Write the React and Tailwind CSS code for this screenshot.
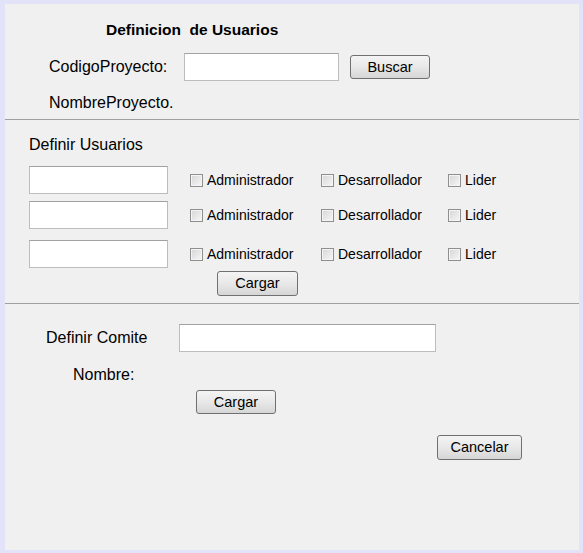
function Field({ className }) {
  return <div className={`bg-white border border-[#bdbdbd] border-t-[#a2a2a2] h-[28px] ${className}`} />
}

function Btn({ children, className }) {
  return (
    <button className={`h-[24px] rounded-[3px] border border-[#707070] bg-linear-to-b from-[#f4f4f4] via-[#e8e8e8] to-[#d6d6d6] text-[14.5px] leading-none text-black ${className}`}>
      {children}
    </button>
  )
}

function Check({ label, className }) {
  return (
    <div className={`flex items-center gap-[4px] text-[14px] ${className}`}>
      <span className="w-[13px] h-[13px] border border-[#8e8f8f] bg-linear-to-br from-[#d6d6d6] to-[#f7f7f7] shadow-[inset_0_0_0_1px_#f4f4f4]" />
      <span>{label}</span>
    </div>
  )
}

function UserRow({ className }) {
  return (
    <div className={`flex items-center ${className}`}>
      <Field className="w-[139px]" />
      <Check label="Administrador" className="ml-[22px] w-[131px]" />
      <Check label="Desarrollador" className="w-[127px]" />
      <Check label="Lider" />
    </div>
  )
}

export default function App() {
  return (
    <div className="w-[583px] h-[553px] bg-[#e2e2f9] pt-[4px] pl-[5px] pr-[4px] pb-[3px] font-['Liberation_Sans',Arial,sans-serif] text-[16px] leading-[20px] text-black">
      <div className="bg-[#f0f0f0] h-full flex flex-col">
        <div className="h-[116px] pt-[16px] border-b border-[#a0a0a0]">
          <div className="pl-[101px] font-bold text-[15.5px] whitespace-pre">Definicion  de Usuarios</div>
          <div className="flex items-center mt-[13px] pl-[44px]">
            <span className="w-[135px]">CodigoProyecto:</span>
            <Field className="w-[155px]" />
            <Btn className="ml-[11px] w-[80px] h-[23px]">Buscar</Btn>
          </div>
          <div className="pl-[44px] mt-[12px]">NombreProyecto.</div>
        </div>

        <div className="h-[184px] pt-[15px] pl-[24px] border-b border-[#a0a0a0]">
          <div>Definir Usuarios</div>
          <UserRow className="mt-[11px]" />
          <UserRow className="mt-[7px]" />
          <UserRow className="mt-[11px]" />
          <Btn className="mt-[3px] ml-[188px] w-[81px] h-[25px]">Cargar</Btn>
        </div>

        <div className="flex-1 pt-[20px]">
          <div className="flex items-center pl-[41px]">
            <span className="w-[133px]">Definir Comite</span>
            <Field className="w-[257px]" />
          </div>
          <div className="pl-[68px] mt-[13px]">Nombre:</div>
          <Btn className="mt-[5px] ml-[191px] w-[80px]">Cargar</Btn>
          <div>
            <Btn className="mt-[21px] ml-[432px] w-[85px] h-[25px]">Cancelar</Btn>
          </div>
        </div>
      </div>
    </div>
  )
}
